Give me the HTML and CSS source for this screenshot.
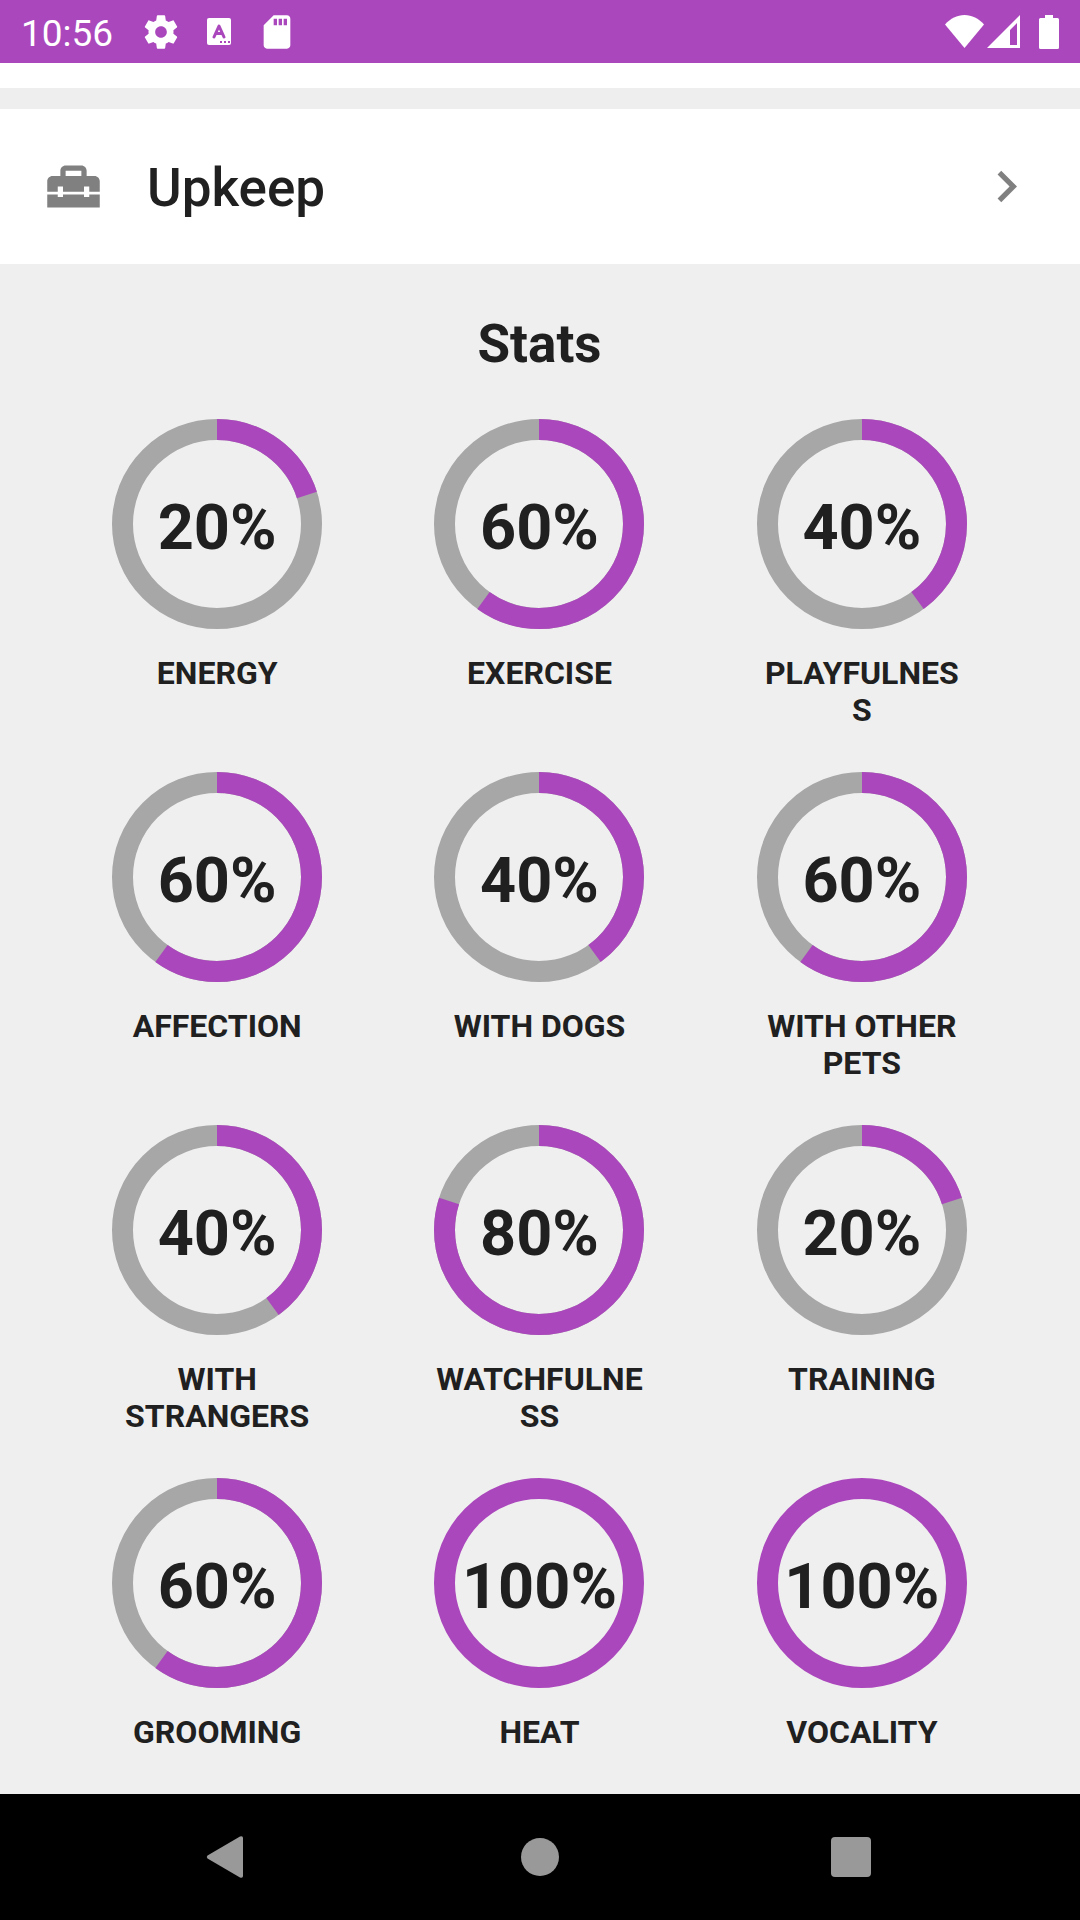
FILE: index.html
```html
<!DOCTYPE html>
<html lang="en">
<head>
<meta charset="utf-8">
<meta name="viewport" content="width=device-width, initial-scale=1">
<title>Stats</title>
<link rel="stylesheet" href="styles.css">
</head>
<body>
<header class="status-bar">
  <time class="clock">10:56</time>
  <div class="notifications">
    <svg class="notice" viewBox="0 0 24 24" aria-hidden="true"><path d="M19.43 12.98c.04-.32.07-.64.07-.98s-.03-.66-.07-.98l2.11-1.65c.19-.15.24-.42.12-.64l-2-3.46c-.12-.22-.39-.3-.61-.22l-2.49 1c-.52-.4-1.08-.73-1.69-.98l-.38-2.65C14.46 2.18 14.25 2 14 2h-4c-.25 0-.46.18-.49.42l-.38 2.65c-.61.25-1.17.59-1.69.98l-2.49-1c-.23-.09-.49 0-.61.22l-2 3.46c-.13.22-.07.49.12.64l2.11 1.65c-.04.32-.07.65-.07.98s.03.66.07.98l-2.11 1.65c-.19.15-.24.42-.12.64l2 3.46c.12.22.39.3.61.22l2.49-1c.52.4 1.08.73 1.69.98l.38 2.65c.03.24.24.42.49.42h4c.25 0 .46-.18.49-.42l.38-2.65c.61-.25 1.17-.59 1.69-.98l2.49 1c.23.09.49 0 .61-.22l2-3.46c.12-.22.07-.49-.12-.64l-2.11-1.65zM12 15.500c-1.930 0-3.500-1.570-3.500-3.500s1.570-3.500 3.500-3.500 3.500 1.570 3.500 3.500-1.570 3.500-3.500 3.500z"/></svg>
    <svg class="notice" viewBox="0 0 40 40" aria-hidden="true"><rect x="8" y="6" width="24" height="27" rx="2"/><path class="cut-line" d="M15 25l5-11 5 11M17 21.500h6"/><path class="cut" d="M21 29h2v2h-2zM25 29h2v2h-2zM29 29h2v2h-2z"/></svg>
    <svg class="notice" viewBox="0 0 24 24" aria-hidden="true"><path d="M18 2h-8L4 8v12c0 1.100.9 2 2 2h12c1.100 0 2-.9 2-2V4c0-1.100-.9-2-2-2zm-6 6h-2V4h2v4zm3 0h-2V4h2v4zm3 0h-2V4h2v4z"/></svg>
  </div>
  <div class="signals">
    <svg class="wifi" viewBox="0 0 39 34" aria-hidden="true"><path d="M19.500 33L0 9.500C5.500 3.500 12 0 19.500 0S33.500 3.500 39 9.500z"/></svg>
    <svg class="cell" viewBox="0 0 33 34" aria-hidden="true"><path fill-rule="evenodd" d="M33 0v33H0zM30 8l-7 7v15h7z"/></svg>
    <svg class="battery" viewBox="0 0 20 34" aria-hidden="true"><path d="M6 0h8v3h4.500a1.500 1.500 0 0 1 1.500 1.500v28a1.500 1.500 0 0 1-1.500 1.500h-17A1.500 1.500 0 0 1 0 32.500v-28A1.500 1.500 0 0 1 1.500 3H6z"/></svg>
  </div>
</header>

<main class="content">
  <button class="row" type="button">
    <svg class="row-icon" viewBox="0 0 24 24" aria-hidden="true"><path d="M18 16h-2v-1H8v1H6v-1H2v5h20v-5h-4v1zM20 8h-3V6c0-1.100-.9-2-2-2H9c-1.100 0-2 .9-2 2v2H4c-1.100 0-2 .9-2 2v4h4v-2h2v2h8v-2h2v2h4v-4c0-1.100-.9-2-2-2zm-5 0H9V6h6v2z"/></svg>
    <span class="row-title">Upkeep</span>
    <svg class="row-icon" viewBox="0 0 24 24" aria-hidden="true"><path d="M10 6L8.590 7.410 13.170 12l-4.580 4.590L10 18l6-6z"/></svg>
  </button>

  <section class="stats" aria-labelledby="stats-title">
    <h2 class="stats-title" id="stats-title">Stats</h2>
    <ul class="stats-grid">
      <li class="stat"><div class="gauge"><svg class="ring" viewBox="0 0 210 210" aria-hidden="true"><circle class="track" cx="105" cy="105" r="94.500"/><circle class="fill" cx="105" cy="105" r="94.500" pathLength="100" stroke-dasharray="20 100"/></svg><span class="value">20%</span></div><span class="label">ENERGY</span></li>
      <li class="stat"><div class="gauge"><svg class="ring" viewBox="0 0 210 210" aria-hidden="true"><circle class="track" cx="105" cy="105" r="94.500"/><circle class="fill" cx="105" cy="105" r="94.500" pathLength="100" stroke-dasharray="60 100"/></svg><span class="value">60%</span></div><span class="label">EXERCISE</span></li>
      <li class="stat"><div class="gauge"><svg class="ring" viewBox="0 0 210 210" aria-hidden="true"><circle class="track" cx="105" cy="105" r="94.500"/><circle class="fill" cx="105" cy="105" r="94.500" pathLength="100" stroke-dasharray="40 100"/></svg><span class="value">40%</span></div><span class="label">PLAYFULNESS</span></li>
      <li class="stat"><div class="gauge"><svg class="ring" viewBox="0 0 210 210" aria-hidden="true"><circle class="track" cx="105" cy="105" r="94.500"/><circle class="fill" cx="105" cy="105" r="94.500" pathLength="100" stroke-dasharray="60 100"/></svg><span class="value">60%</span></div><span class="label">AFFECTION</span></li>
      <li class="stat"><div class="gauge"><svg class="ring" viewBox="0 0 210 210" aria-hidden="true"><circle class="track" cx="105" cy="105" r="94.500"/><circle class="fill" cx="105" cy="105" r="94.500" pathLength="100" stroke-dasharray="40 100"/></svg><span class="value">40%</span></div><span class="label">WITH DOGS</span></li>
      <li class="stat"><div class="gauge"><svg class="ring" viewBox="0 0 210 210" aria-hidden="true"><circle class="track" cx="105" cy="105" r="94.500"/><circle class="fill" cx="105" cy="105" r="94.500" pathLength="100" stroke-dasharray="60 100"/></svg><span class="value">60%</span></div><span class="label">WITH OTHER PETS</span></li>
      <li class="stat"><div class="gauge"><svg class="ring" viewBox="0 0 210 210" aria-hidden="true"><circle class="track" cx="105" cy="105" r="94.500"/><circle class="fill" cx="105" cy="105" r="94.500" pathLength="100" stroke-dasharray="40 100"/></svg><span class="value">40%</span></div><span class="label">WITH STRANGERS</span></li>
      <li class="stat"><div class="gauge"><svg class="ring" viewBox="0 0 210 210" aria-hidden="true"><circle class="track" cx="105" cy="105" r="94.500"/><circle class="fill" cx="105" cy="105" r="94.500" pathLength="100" stroke-dasharray="80 100"/></svg><span class="value">80%</span></div><span class="label">WATCHFULNESS</span></li>
      <li class="stat"><div class="gauge"><svg class="ring" viewBox="0 0 210 210" aria-hidden="true"><circle class="track" cx="105" cy="105" r="94.500"/><circle class="fill" cx="105" cy="105" r="94.500" pathLength="100" stroke-dasharray="20 100"/></svg><span class="value">20%</span></div><span class="label">TRAINING</span></li>
      <li class="stat"><div class="gauge"><svg class="ring" viewBox="0 0 210 210" aria-hidden="true"><circle class="track" cx="105" cy="105" r="94.500"/><circle class="fill" cx="105" cy="105" r="94.500" pathLength="100" stroke-dasharray="60 100"/></svg><span class="value">60%</span></div><span class="label">GROOMING</span></li>
      <li class="stat"><div class="gauge"><svg class="ring" viewBox="0 0 210 210" aria-hidden="true"><circle class="fill" cx="105" cy="105" r="94.500"/></svg><span class="value">100%</span></div><span class="label">HEAT</span></li>
      <li class="stat"><div class="gauge"><svg class="ring" viewBox="0 0 210 210" aria-hidden="true"><circle class="fill" cx="105" cy="105" r="94.500"/></svg><span class="value">100%</span></div><span class="label">VOCALITY</span></li>
    </ul>
  </section>
</main>

<nav class="nav-bar" aria-label="System">
  <button class="nav-button" type="button" aria-label="Back"><svg class="nav-icon" viewBox="0 0 48 48" aria-hidden="true"><path d="M2.500 22.500Q1 24 2.500 25.500L35 44.500Q38 45.500 38 43V5Q38 2.500 35 3.500z"/></svg></button>
  <button class="nav-button" type="button" aria-label="Home"><svg class="nav-icon" viewBox="0 0 48 48" aria-hidden="true"><circle cx="24" cy="24" r="19"/></svg></button>
  <button class="nav-button" type="button" aria-label="Recent apps"><svg class="nav-icon" viewBox="0 0 48 48" aria-hidden="true"><rect x="4" y="4" width="40" height="40" rx="4"/></svg></button>
</nav>
</body>
</html>
```
FILE: styles.css
```css
* {
  box-sizing: border-box;
}

body {
  margin: 0;
  min-height: 100vh;
  display: flex;
  flex-direction: column;
  background: #eeeeee;
  color: #202020;
  font-family: Roboto, "Liberation Sans", sans-serif;
}

button {
  border: 0;
  margin: 0;
  color: inherit;
  font: inherit;
  cursor: pointer;
}

svg {
  display: block;
}

/* Status bar */
.status-bar {
  display: flex;
  align-items: center;
  height: 63px;
  padding: 0 21px;
  background: #ab47bc;
  color: #ffffff;
}

.clock {
  padding-top: 4px;
  font-size: 37px;
  line-height: 44px;
}

.notifications {
  display: flex;
  gap: 18px;
  margin-left: 28px;
}

.notice {
  width: 40px;
  height: 40px;
  fill: #ffffff;
}

.notice .cut {
  fill: #ab47bc;
}

.notice .cut-line {
  fill: none;
  stroke: #ab47bc;
  stroke-width: 3;
  stroke-linecap: round;
  stroke-linejoin: round;
}

.signals {
  display: flex;
  margin-left: auto;
  fill: #ffffff;
}

.wifi {
  width: 39px;
  height: 34px;
}

.cell {
  width: 33px;
  height: 34px;
  margin-left: 3px;
}

.battery {
  width: 20px;
  height: 34px;
  margin-left: 19px;
}

/* Page content */
.content {
  flex: 1;
  display: flex;
  flex-direction: column;
  border-top: 25px solid #ffffff;
  padding-top: 21px;
}

.row {
  display: flex;
  align-items: center;
  gap: 42px;
  width: 100%;
  padding: 46px 42px;
  background: #ffffff;
  text-align: left;
}

.row-icon {
  flex: none;
  width: 63px;
  height: 63px;
  fill: #808080;
}

.row-title {
  flex: 1;
  padding-top: 3px;
  font-size: 53px;
  font-weight: 500;
  line-height: 60px;
}

.stats {
  flex: 1;
  padding: 49px 57px 6px 56px;
  background: #efefef;
}

.stats-title {
  margin: 0 0 44px;
  font-size: 53px;
  font-weight: 700;
  line-height: 62px;
  text-align: center;
}

.stats-grid {
  display: grid;
  grid-template-columns: repeat(3, 1fr);
  row-gap: 43px;
  margin: 0;
  padding: 0;
  list-style: none;
}

.stat {
  display: flex;
  flex-direction: column;
  align-items: center;
  gap: 26px;
}

.gauge {
  display: grid;
  place-items: center;
  width: 210px;
  height: 210px;
}

.ring,
.value {
  grid-area: 1 / 1;
}

.ring {
  width: 210px;
  height: 210px;
  transform: rotate(-90deg);
}

.ring circle {
  fill: none;
  stroke-width: 21;
}

.ring .track {
  stroke: #a7a7a7;
}

.ring .fill {
  stroke: #ab47bc;
}

.value {
  padding-top: 8px;
  font-size: 63px;
  font-weight: 700;
  line-height: 74px;
}

.label {
  width: 210px;
  min-height: 74px;
  font-size: 32px;
  font-weight: 700;
  line-height: 37px;
  text-align: center;
  overflow-wrap: anywhere;
}

/* Navigation bar */
.nav-bar {
  display: grid;
  grid-template-columns: repeat(3, 1fr);
  height: 126px;
  padding: 0 74px;
  background: #000000;
}

.nav-button {
  display: grid;
  place-items: center;
  padding: 0;
  background: transparent;
}

.nav-icon {
  width: 48px;
  height: 48px;
  fill: #999999;
}
```
